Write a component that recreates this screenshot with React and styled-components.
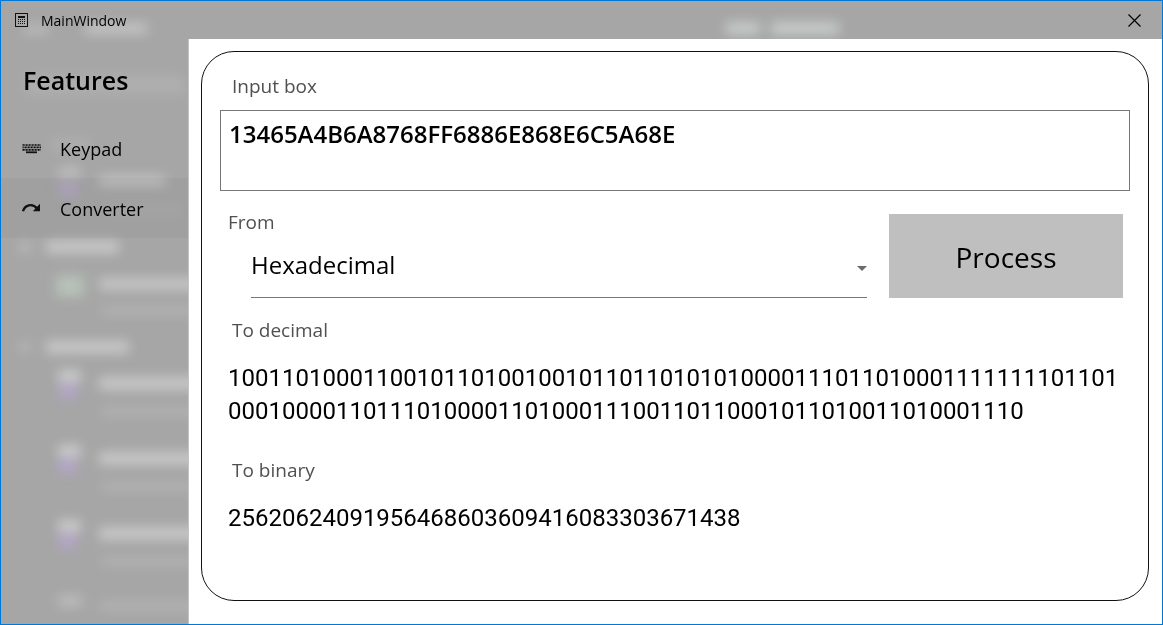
import React, { useState } from "react";
import styled, { createGlobalStyle } from "styled-components";

const GlobalStyle = createGlobalStyle`
  *, *::before, *::after { box-sizing: border-box; }
  body {
    margin: 0;
    color: #000;
    background: #fff;
    font-family: "Open Sans", "Noto Sans", sans-serif;
  }
`;

const Window = styled.div`
  position: relative;
  isolation: isolate;
  display: flex;
  flex-direction: column;
  min-height: 100vh;
  border: 1px solid #0078d7;
  background: #a6a6a6;
  overflow: hidden;
`;

const Backdrop = styled.svg`
  position: absolute;
  top: 0;
  left: 0;
  z-index: -1;
  width: 100%;
  height: 100%;
`;

const TitleBar = styled.header`
  display: flex;
  align-items: center;
  height: 38px;
  padding-left: 14px;
  gap: 12px;
`;

const Title = styled.span`
  flex: 1;
  padding-top: 2px;
  font-size: 14px;
  line-height: 20px;
`;

const CloseButton = styled.button`
  display: flex;
  align-items: center;
  justify-content: center;
  width: 56px;
  height: 38px;
  padding: 0;
  border: 0;
  background: transparent;
`;

const Body = styled.div`
  flex: 1;
  display: flex;
`;

const Sidebar = styled.aside`
  flex: none;
  width: 188px;
  border-right: 1px solid #c4c4c4;
`;

const Heading = styled.h1`
  margin: 0;
  padding: 23px 0 20px 22px;
  font-size: 25px;
  font-weight: 600;
  line-height: 36px;
`;

const NavLink = styled.a`
  display: flex;
  align-items: center;
  gap: 19px;
  height: 60px;
  padding-left: 21px;
  color: #000;
  background: ${(p) => (p.$active ? "rgba(0, 0, 0, 0.03)" : "transparent")};
  font-size: 18px;
  line-height: 24px;
  text-decoration: none;
`;

const NavText = styled.span`
  padding-top: 2px;
`;

const Main = styled.main`
  flex: 1;
  min-width: 0;
  display: flex;
  padding: 12px 13px 23px 12px;
  background: #fff;
`;

const Panel = styled.form`
  flex: 1;
  min-width: 0;
  padding: 20px 18px 24px;
  border: 1px solid #111;
  border-radius: 33px;
`;

const Label = styled.label`
  display: block;
  padding-left: ${(p) => p.$inset || 0}px;
  color: #505050;
  font-size: 19px;
  line-height: 28px;
`;

const NumberInput = styled.textarea`
  display: block;
  width: 100%;
  height: 81px;
  margin-top: 10px;
  padding: 7px 8px;
  border: 1px solid #767676;
  border-radius: 0;
  outline: 0;
  resize: none;
  color: #000;
  background: #fff;
  font-family: "Open Sans", "Noto Sans", sans-serif;
  font-size: 24px;
  font-weight: 600;
  line-height: 32px;
  overflow: hidden;
`;

const SourceRow = styled.div`
  display: flex;
  gap: 22px;
  margin-top: 23px;
  padding: 0 7px 0 8px;
`;

const SourceField = styled.div`
  flex: 1;
  min-width: 0;
  margin-top: -6px;
`;

const SelectBox = styled.div`
  display: flex;
  align-items: center;
  height: 62px;
  margin-left: 23px;
  padding-top: 4px;
  border-bottom: 1px solid #767676;
`;

const Select = styled.select`
  flex: 1;
  min-width: 0;
  height: 56px;
  padding: 0 0 8px;
  border: 0;
  outline: 0;
  appearance: none;
  color: #000;
  background: transparent;
  font-family: inherit;
  font-size: 24px;
`;

const ProcessButton = styled.button`
  flex: none;
  width: 234px;
  height: 84px;
  padding: 2px 0 0;
  border: 0;
  color: #000;
  background: #bfbfbf;
  font-family: inherit;
  font-size: 28px;
`;

const Result = styled.section`
  margin-top: 18px;

  & + & {
    margin-top: 28px;
  }
`;

const Output = styled.output`
  display: block;
  margin-top: 18px;
  padding: 0 8px;
  font-family: Roboto, "Noto Sans", sans-serif;
  font-size: 24px;
  line-height: 33px;
  overflow-wrap: anywhere;
`;

const CalculatorIcon = () => (
  <svg width="14" height="15" viewBox="0 0 14 15" aria-hidden="true">
    <rect x="0.5" y="0.5" width="12" height="13" fill="none" stroke="#111" />
    <path d="M3 3h7v2H3z" fill="#111" />
    <path
      d="M3 6.5h1m1 0h1m1 0h1m1 0h1M3 8.5h1m1 0h1m1 0h1m1 0h1M3 10.5h1m1 0h1m1 0h1m1 0h1"
      stroke="#111"
    />
  </svg>
);

const KeyboardIcon = () => (
  <svg width="19" height="12" viewBox="0 0 19 12" aria-hidden="true">
    <path
      d="M0.5 3h2.2m.8 0h2.2m.8 0h2.2m.8 0h2.2m.8 0h2.2m.8 0h2.2m.8 0h1.7M0.5 5.4h1.2m.8 0h2.2m.8 0h2.2m.8 0h2.2m.8 0h2.2m.8 0h2.2m.8 0h1.7M0.5 7.8h2.2m.8 0h2.2m.8 0h2.2m.8 0h2.2m.8 0h2.2m.8 0h2.2m.8 0h1.7"
      stroke="#111"
      strokeWidth="1.7"
    />
    <path d="M4 10.3h11" stroke="#111" strokeWidth="1.8" />
  </svg>
);

const RedoIcon = () => (
  <svg width="19" height="12" viewBox="0 0 19 12" aria-hidden="true">
    <path d="M1 9.2C2.8 2.8 10.4 1 15 6.4" fill="none" stroke="#111" strokeWidth="2.3" />
    <path d="M18 1.8v7.4h-7.2z" fill="#111" />
  </svg>
);

const CloseIcon = () => (
  <svg width="13" height="13" viewBox="0 0 13 13" aria-hidden="true">
    <path d="M0.5 0.5l12 12M12.5 0.5l-12 12" stroke="#000" strokeWidth="1.2" />
  </svg>
);

const CaretIcon = () => (
  <svg width="10" height="5" viewBox="0 0 10 5" aria-hidden="true">
    <path d="M0 0h10L5 5z" fill="#6b6b6b" />
  </svg>
);

/* Soft shapes that show through the translucent title bar and sidebar. */
const glows = [
  [22, 24, 26, 9, "#fff", 0.24],
  [84, 22, 62, 11, "#fff", 0.34],
  [725, 21, 34, 13, "#f4fffa", 0.42],
  [770, 21, 68, 13, "#f4fffa", 0.42],
  [24, 74, 160, 20, "#fff", 0.1],
  [50, 138, 40, 10, "#fff", 0.12],
  [57, 166, 23, 10, "#fff", 0.28],
  [58, 181, 18, 14, "#c3a6ee", 0.4],
  [98, 174, 66, 11, "#fff", 0.3],
  [100, 205, 80, 8, "#fff", 0.08],
  [18, 241, 12, 10, "#fff", 0.24],
  [45, 240, 73, 12, "#fff", 0.4],
  [55, 274, 28, 22, "#d0ead4", 0.4],
  [98, 277, 110, 12, "#fff", 0.36],
  [100, 305, 110, 9, "#fff", 0.14],
  [18, 341, 12, 10, "#fff", 0.18],
  [45, 340, 83, 12, "#fff", 0.4],
  ...[370, 445, 520].flatMap((y) => [
    [57, y - 1, 23, 12, "#fff", 0.42],
    [58, y + 13, 18, 14, "#c3a6ee", 0.5],
    [98, y + 6, 110, 13, "#fff", 0.38],
    [100, y + 36, 110, 9, "#fff", 0.14],
  ]),
  [57, 594, 24, 12, "#fff", 0.24],
  [98, 600, 110, 10, "#fff", 0.14],
];

const options = ["Hexadecimal", "Decimal", "Binary", "Octal"];

export default function App() {
  const [value, setValue] = useState("13465A4B6A8768FF6886E868E6C5A68E");
  const [base, setBase] = useState("Hexadecimal");

  return (
    <>
      <GlobalStyle />
      <Window>
        <Backdrop aria-hidden="true">
          <defs>
            <filter id="soft" x="-10%" y="-10%" width="120%" height="120%" colorInterpolationFilters="sRGB">
              <feGaussianBlur stdDeviation="6" />
            </filter>
          </defs>
          <g filter="url(#soft)">
            {glows.map(([x, y, w, h, fill, opacity], i) => (
              <rect key={i} x={x} y={y} width={w} height={h} fill={fill} opacity={opacity} />
            ))}
          </g>
        </Backdrop>
        <TitleBar>
          <CalculatorIcon />
          <Title>MainWindow</Title>
          <CloseButton type="button" aria-label="Close">
            <CloseIcon />
          </CloseButton>
        </TitleBar>
        <Body>
          <Sidebar>
            <Heading>Features</Heading>
            <nav>
              <NavLink href="#keypad">
                <KeyboardIcon />
                <NavText>Keypad</NavText>
              </NavLink>
              <NavLink href="#converter" $active aria-current="page">
                <RedoIcon />
                <NavText>Converter</NavText>
              </NavLink>
            </nav>
          </Sidebar>
          <Main>
            <Panel onSubmit={(e) => e.preventDefault()}>
              <Label htmlFor="number" $inset={12}>Input box</Label>
              <NumberInput
                id="number"
                spellCheck={false}
                value={value}
                onChange={(e) => setValue(e.target.value)}
              />
              <SourceRow>
                <SourceField>
                  <Label htmlFor="base">From</Label>
                  <SelectBox>
                    <Select id="base" value={base} onChange={(e) => setBase(e.target.value)}>
                      {options.map((o) => (
                        <option key={o}>{o}</option>
                      ))}
                    </Select>
                    <CaretIcon />
                  </SelectBox>
                </SourceField>
                <ProcessButton type="submit">Process</ProcessButton>
              </SourceRow>
              <Result>
                <Label htmlFor="decimal" $inset={12}>To decimal</Label>
                <Output id="decimal">
                  10011010001100101101001001011011010101000011101101000111111110110100010000110111010000110100011100110110001011010011010001110
                </Output>
              </Result>
              <Result>
                <Label htmlFor="binary" $inset={12}>To binary</Label>
                <Output id="binary">25620624091956468603609416083303671438</Output>
              </Result>
            </Panel>
          </Main>
        </Body>
      </Window>
    </>
  );
}
